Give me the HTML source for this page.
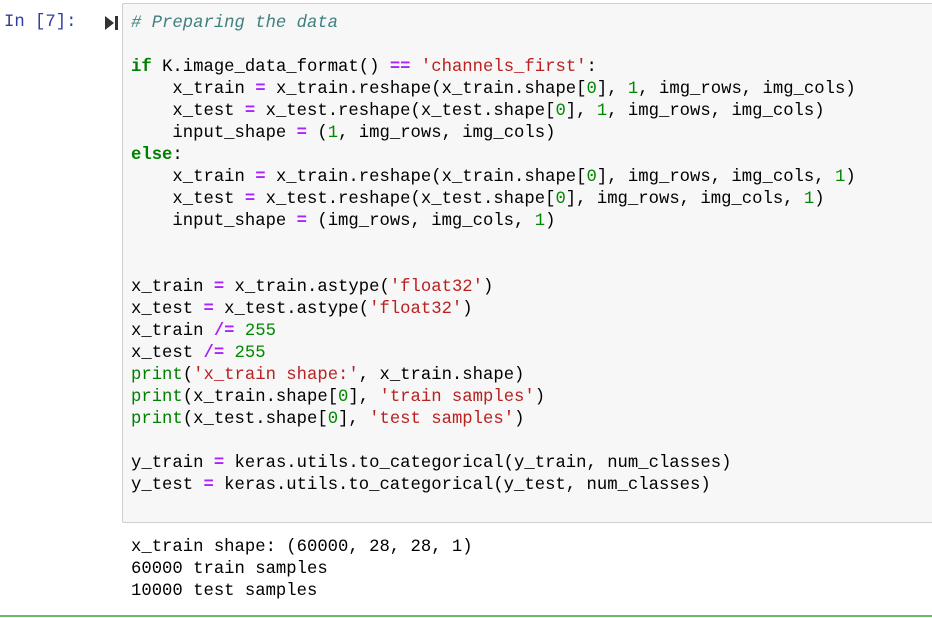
<!DOCTYPE html>
<html><head><meta charset="utf-8"><style>
html,body{margin:0;padding:0;background:#fff;width:932px;height:618px;overflow:hidden;position:relative}
.mono{font-family:"Liberation Mono","DejaVu Sans Mono",monospace;font-size:17.25px;line-height:22px;white-space:pre}
.prompt{position:absolute;left:4px;top:12px;color:#303f9f}
.run{position:absolute;left:104px;top:15px;width:16px;height:16px}
.cell{position:absolute;left:122px;top:3px;width:812px;height:520px;background:#f7f7f7;border:1px solid #cfcfcf;border-radius:2px;box-sizing:border-box}
.code{position:absolute;left:131px;top:13px;color:#000}
.out{position:absolute;left:131px;top:537px;color:#000}
.bot{position:absolute;left:0;top:615px;width:932px;height:2px;background:#66bb6a}
.c{color:#408080;font-style:italic}.k{color:#008000;font-weight:bold}.o{color:#aa22ff;font-weight:bold}.s{color:#ba2121}.n{color:#080}.b{color:#008000}
</style></head><body>
<div class="mono prompt">In [7]:</div>
<svg class="run" viewBox="0 0 16 16"><path d="M1 1 L10 8 L1 15Z" fill="#333"/><rect x="11" y="1" width="3" height="14" fill="#333"/></svg>
<div class="cell"></div>
<div class="mono code"><span class="c"># Preparing the data</span>

<span class="k">if</span> K.image_data_format() <span class="o">==</span> <span class="s">'channels_first'</span>:
    x_train <span class="o">=</span> x_train.reshape(x_train.shape[<span class="n">0</span>], <span class="n">1</span>, img_rows, img_cols)
    x_test <span class="o">=</span> x_test.reshape(x_test.shape[<span class="n">0</span>], <span class="n">1</span>, img_rows, img_cols)
    input_shape <span class="o">=</span> (<span class="n">1</span>, img_rows, img_cols)
<span class="k">else</span>:
    x_train <span class="o">=</span> x_train.reshape(x_train.shape[<span class="n">0</span>], img_rows, img_cols, <span class="n">1</span>)
    x_test <span class="o">=</span> x_test.reshape(x_test.shape[<span class="n">0</span>], img_rows, img_cols, <span class="n">1</span>)
    input_shape <span class="o">=</span> (img_rows, img_cols, <span class="n">1</span>)


x_train <span class="o">=</span> x_train.astype(<span class="s">'float32'</span>)
x_test <span class="o">=</span> x_test.astype(<span class="s">'float32'</span>)
x_train <span class="o">/=</span> <span class="n">255</span>
x_test <span class="o">/=</span> <span class="n">255</span>
<span class="b">print</span>(<span class="s">'x_train shape:'</span>, x_train.shape)
<span class="b">print</span>(x_train.shape[<span class="n">0</span>], <span class="s">'train samples'</span>)
<span class="b">print</span>(x_test.shape[<span class="n">0</span>], <span class="s">'test samples'</span>)

y_train <span class="o">=</span> keras.utils.to_categorical(y_train, num_classes)
y_test <span class="o">=</span> keras.utils.to_categorical(y_test, num_classes)</div>
<div class="mono out">x_train shape: (60000, 28, 28, 1)
60000 train samples
10000 test samples</div>
<div class="bot"></div>
</body></html>
